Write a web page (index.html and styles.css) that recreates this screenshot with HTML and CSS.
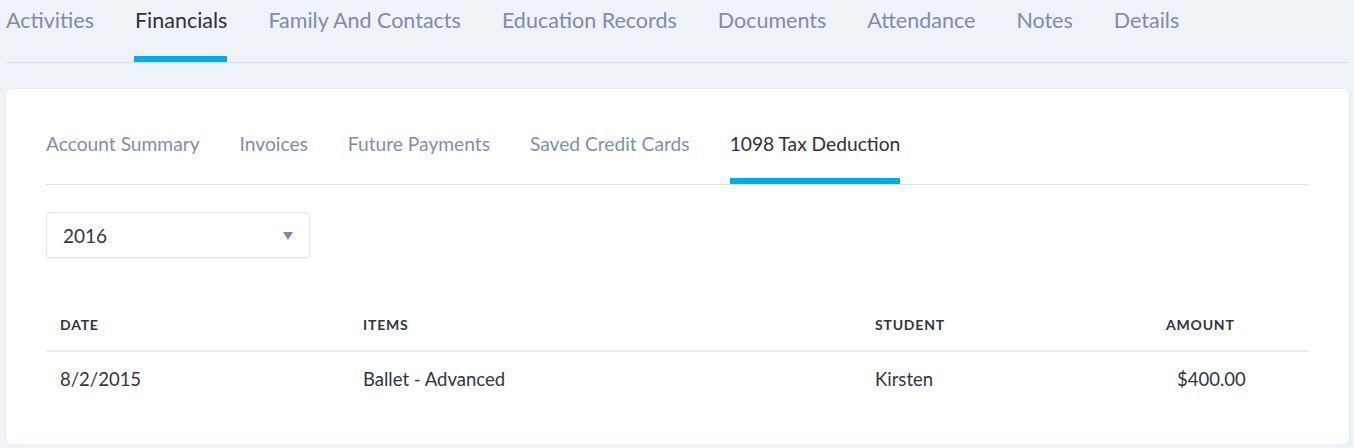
FILE: index.html
```html
<!DOCTYPE html>
<html lang="en">
<head>
<meta charset="utf-8">
<title>Financials</title>
<link rel="stylesheet" href="styles.css">
</head>
<body>
<div class="page">
  <nav class="main-tabs">
    <a class="main-tab">Activities</a>
    <a class="main-tab active">Financials</a>
    <a class="main-tab">Family And Contacts</a>
    <a class="main-tab">Education Records</a>
    <a class="main-tab">Documents</a>
    <a class="main-tab">Attendance</a>
    <a class="main-tab">Notes</a>
    <a class="main-tab">Details</a>
  </nav>
  <section class="card">
    <nav class="sub-tabs">
      <a class="sub-tab">Account Summary</a>
      <a class="sub-tab">Invoices</a>
      <a class="sub-tab">Future Payments</a>
      <a class="sub-tab">Saved Credit Cards</a>
      <a class="sub-tab active">1098 Tax Deduction</a>
    </nav>
    <div class="select">
      <span class="select-value">2016</span>
      <svg class="select-arrow" width="10" height="8" viewBox="0 0 10 8"><path d="M0 0H10L5 8Z" fill="#7a89ad"/></svg>
    </div>
    <table class="tax-table">
      <thead>
        <tr>
          <th class="col-date">Date</th>
          <th class="col-items">Items</th>
          <th class="col-student">Student</th>
          <th class="col-amount">Amount</th>
        </tr>
      </thead>
      <tbody>
        <tr>
          <td>8/2/2015</td>
          <td>Ballet - Advanced</td>
          <td>Kirsten</td>
          <td class="amount">$400.00</td>
        </tr>
      </tbody>
    </table>
  </section>
</div>
</body>
</html>
```
FILE: styles.css
```css
* { box-sizing: border-box; }
html, body {
  margin: 0;
  padding: 0;
  background: #eff2f7;
  font-family: "Lato", "Noto Sans", sans-serif;
  color: #2f3644;
}
.page {
  padding: 0 5px 0 6px;
}
.main-tabs {
  display: flex;
  gap: 41px;
  height: 63px;
  border-bottom: 1px solid #dadee4;
}
.main-tab {
  position: relative;
  font-size: 21.5px;
  line-height: 26px;
  padding-top: 7px;
  color: #7d8cb1;
  white-space: nowrap;
}
.main-tab.active {
  color: #2b313c;
}
.main-tab.active::after {
  content: "";
  position: absolute;
  left: -1px;
  right: 0;
  bottom: 0;
  height: 6px;
  background: #00aeef;
}
.card {
  margin-top: 26px;
  background: #fff;
  border-radius: 6px;
  box-shadow: 0 1px 3px rgba(60, 70, 90, 0.08);
  padding: 0 40px 39px;
}
.sub-tabs {
  display: flex;
  gap: 40px;
  height: 96px;
  border-bottom: 1px solid #dde2e7;
}
.sub-tab {
  position: relative;
  font-size: 19.2px;
  line-height: 22px;
  padding-top: 44px;
  color: #7f8eb2;
  white-space: nowrap;
}
.sub-tab.active {
  color: #2b313c;
}
.sub-tab.active::after {
  content: "";
  position: absolute;
  left: 0;
  right: 0;
  bottom: 0;
  height: 6px;
  background: #00aeef;
}
.select {
  margin-top: 27px;
  width: 264px;
  height: 46px;
  border: 1px solid #e2e5e9;
  border-radius: 4px;
  box-shadow: 0 1px 2px rgba(0, 0, 0, 0.06);
  display: flex;
  align-items: center;
  justify-content: space-between;
  padding: 0 16px 0 16px;
  font-size: 19px;
  color: #2f3644;
}
.select-arrow {
  display: block;
  margin-top: 1px;
}
.tax-table {
  margin-top: 40px;
  width: 100%;
  border-collapse: collapse;
  table-layout: fixed;
}
.tax-table th {
  height: 53px;
  text-align: left;
  font-size: 14px;
  font-weight: 700;
  text-transform: uppercase;
  letter-spacing: 0.8px;
  color: #2f3644;
  padding: 0 0 0 14px;
  border-bottom: 2px solid #e9edf1;
  vertical-align: middle;
}
.tax-table td {
  height: 54px;
  font-size: 18.5px;
  padding: 0 0 0 14px;
  vertical-align: middle;
  color: #2f3644;
}
.col-date { width: 303px; }
.col-items { width: 512px; }
.col-student { width: 291px; }
.col-amount { width: 157px; }
.tax-table td.amount { padding-left: 25px; }
```
